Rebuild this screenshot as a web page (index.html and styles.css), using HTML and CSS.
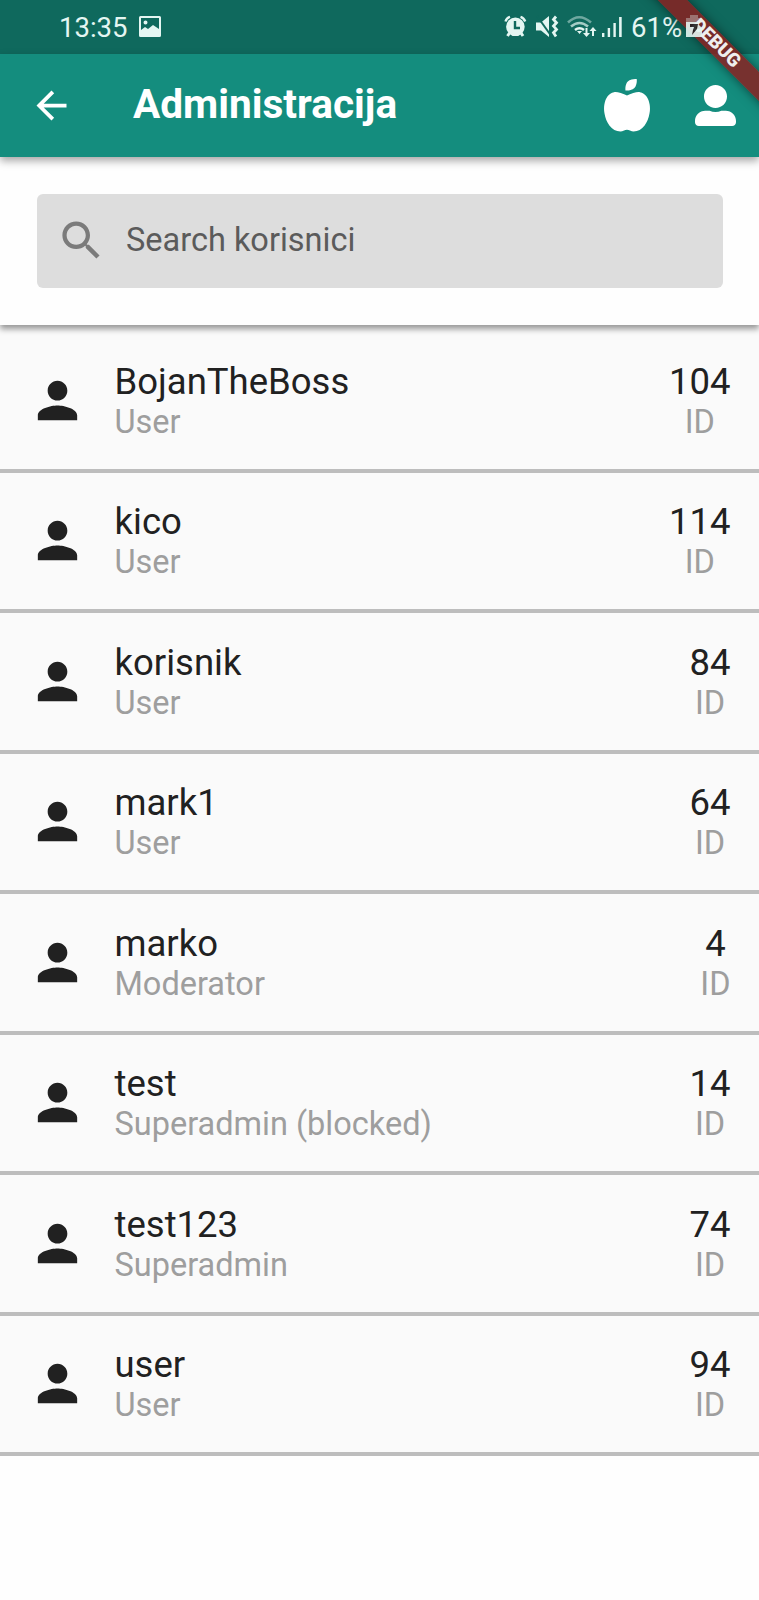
FILE: index.html
```html
<!DOCTYPE html>
<html lang="hr">
<head>
<meta charset="utf-8">
<title>Administracija</title>
<link rel="stylesheet" href="styles.css">
</head>
<body>
<svg width="0" height="0" class="defs"><symbol id="person" viewBox="0 0 24 24"><path d="M12 12c2.21 0 4-1.79 4-4s-1.79-4-4-4-4 1.79-4 4 1.79 4 4 4zm0 2c-2.67 0-8 1.34-8 4v2h16v-2c0-2.66-5.33-4-8-4z"/></symbol></svg>
<div class="screen">
  <div class="status">
    <span class="clock">13:35</span>
    <svg class="photo" width="22" height="21" viewBox="0 0 22 21"><path fill-rule="evenodd" d="M1.5 0h19Q22 0 22 1.5v18q0 1.500-1.500 1.500h-19Q0 21 0 19.500v-18Q0 0 1.500 0zM2 2v12l4-3 3 2 5-4 6 4V2zM6.500 4.500a2 2 0 1 1 0 4 2 2 0 0 1 0-4z"/></svg>
    <svg class="indicators" width="120" height="24" viewBox="0 0 120 24">
      <g fill="none" stroke="currentColor">
        <path stroke-width="2.400" d="M1.500 6.500Q2.500 3 6 1.800M16.500 1.800Q20 3 21.200 6.500"/>
        <path stroke-width="3" d="M5.500 18l-2 3M17 18l2 3"/>
        <path stroke-width="2.800" d="M52 1.500l-2.500 3 3 3.300-3 3.300 3 3.300-3 3.300 2.500 3.800"/>
        <path opacity=".45" stroke-width="2.600" d="M64 7.500Q75 -3 87 7.500"/>
        <path opacity=".7" stroke-width="2.600" d="M67 11.500Q75.500 4.500 84 11.500"/>
        <path stroke-width="2.600" d="M71 15q4.500-3.500 9 0"/>
        <path stroke-width="2" d="M82.500 13v7M89 21v-7"/>
      </g>
      <circle cx="11.400" cy="11.800" r="9.300"/>
      <path class="cut" d="M11 6v7h5" stroke-width="2.400" fill="none"/>
      <path d="M32 7.500h5l8-6.500v21l-8-6.500h-5z"/>
      <path class="cut" d="M33 1l15 21" stroke-width="2" fill="none"/>
      <path d="M73 16h5l-2.500 3zM79 18h7l-3.500 4zM85.500 16h7L89 12zM98 18h2.400v4H98zM103.700 13h2.400v9h-2.400zM109.400 8h2.400v14h-2.400zM115.100 2h2.600v20h-2.600z"/>
    </svg>
    <span class="charge">61%</span>
    <svg class="battery" width="16" height="22" viewBox="0 0 16 22"><path opacity=".4" d="M4 0h8v3h4v5H0V3h4z"/><path d="M0 7h10l6 6v9H0z"/><path fill="#222" d="M4 9h8l-1 5-5 6 1-5 1-3H4z"/></svg>
  </div>
  <header class="appbar">
    <svg class="back" viewBox="0 0 24 24"><path d="M20 11H7.830l5.590-5.590L12 4l-8 8 8 8 1.410-1.410L7.830 13H20v-2z"/></svg>
    <h1 class="title">Administracija</h1>
    <svg class="apple" viewBox="0 0 448 512"><path d="M350.850 129c25.970 4.670 47.270 18.670 63.920 42 14.650 20.670 24.640 46.670 29.960 78 4.670 28.670 4.320 57.330-1 86-7.990 47.330-23.970 87-47.940 119-28.640 38.670-64.590 58-107.870 58-10.660 0-22.300-3.330-34.960-10-8.660-5.330-18.310-8-28.970-8s-20.300 2.670-28.970 8c-12.660 6.670-24.300 10-34.960 10-43.280 0-79.230-19.330-107.870-58-23.970-32-39.950-71.670-47.940-119-5.320-28.670-5.670-57.330-1-86 5.320-31.330 15.310-57.330 29.960-78 16.650-23.330 37.950-37.330 63.920-42 15.980-2.670 37.950-.33 65.920 7 23.970 6.670 44.280 14.670 60.930 24 16.650-9.330 36.960-17.330 60.930-24 27.980-7.330 49.960-9.670 65.940-7zm-54.940-41c-9.320 8.670-21.650 15-36.960 19-10.660 3.330-22.300 5-34.960 5l-14.980-1c-1.330-9.330-1.330-20 0-32 2.670-24 10.320-42.330 22.970-55 9.320-8.670 21.650-15 36.960-19 10.660-3.330 22.300-5 34.960-5l14.980 1 1 15c0 12.670-1.670 24.330-4.990 35-3.990 15.330-10.310 27.670-18.980 37z"/></svg>
    <svg class="account" viewBox="0 0 512 512"><path d="M256 288c79.500 0 144-64.500 144-144S335.500 0 256 0 112 64.500 112 144s64.500 144 144 144zm128 32h-55.100c-22.200 10.200-46.900 16-72.900 16s-50.600-5.800-72.900-16H128C57.300 320 0 377.300 0 448v16c0 26.500 21.500 48 48 48h416c26.500 0 48-21.500 48-48v-16c0-70.700-57.300-128-128-128z"/></svg>
  </header>
  <div class="searchbar">
    <div class="search">
      <svg class="glass" viewBox="0 0 24 24"><path d="M15.500 14h-.79l-.28-.27C15.410 12.590 16 11.110 16 9.500 16 5.910 13.090 3 9.500 3S3 5.910 3 9.500 5.910 16 9.500 16c1.610 0 3.090-.59 4.230-1.570l.27.28v.79l5 4.990L20.490 19l-4.990-5zm-6 0C7.010 14 5 11.990 5 9.500S7.010 5 9.500 5 14 7.010 14 9.500 11.990 14 9.500 14z"/></svg>
      <span class="hint">Search korisnici</span>
    </div>
  </div>
  <main class="list">
    <div class="row"><svg class="avatar"><use href="#person"/></svg><div class="who"><div class="name">BojanTheBoss</div><div class="sub">User</div></div><div class="num"><div class="name">104</div><div class="sub">ID</div></div></div>
    <div class="row"><svg class="avatar"><use href="#person"/></svg><div class="who"><div class="name">kico</div><div class="sub">User</div></div><div class="num"><div class="name">114</div><div class="sub">ID</div></div></div>
    <div class="row"><svg class="avatar"><use href="#person"/></svg><div class="who"><div class="name">korisnik</div><div class="sub">User</div></div><div class="num"><div class="name">84</div><div class="sub">ID</div></div></div>
    <div class="row"><svg class="avatar"><use href="#person"/></svg><div class="who"><div class="name">mark1</div><div class="sub">User</div></div><div class="num"><div class="name">64</div><div class="sub">ID</div></div></div>
    <div class="row"><svg class="avatar"><use href="#person"/></svg><div class="who"><div class="name">marko</div><div class="sub">Moderator</div></div><div class="num"><div class="name">4</div><div class="sub">ID</div></div></div>
    <div class="row"><svg class="avatar"><use href="#person"/></svg><div class="who"><div class="name">test</div><div class="sub">Superadmin (blocked)</div></div><div class="num"><div class="name">14</div><div class="sub">ID</div></div></div>
    <div class="row"><svg class="avatar"><use href="#person"/></svg><div class="who"><div class="name">test123</div><div class="sub">Superadmin</div></div><div class="num"><div class="name">74</div><div class="sub">ID</div></div></div>
    <div class="row"><svg class="avatar"><use href="#person"/></svg><div class="who"><div class="name">user</div><div class="sub">User</div></div><div class="num"><div class="name">94</div><div class="sub">ID</div></div></div>
  </main>
  <div class="corner"><div class="ribbon">DEBUG</div></div>
</div>
</body>
</html>
```
FILE: styles.css
```css
* { box-sizing: border-box; }
body { margin: 0; background: #fff; font-family: Roboto, "Liberation Sans", sans-serif; }
svg { display: block; flex: none; fill: currentColor; }
.defs { position: absolute; }
.screen { position: relative; width: 759px; height: 1600px; overflow: hidden; background: #fefefe; }
.status { display: flex; height: 54px; padding: 0 57px 0 59px; background: #0f695d; color: #e4f6f2; font-size: 27.5px; line-height: 56px; }
.clock { width: 79.500px; }
.photo { margin-top: 16px; }
.indicators { margin: 14.500px 0 0 343.500px; }
.cut { stroke: #0f695d; }
.charge { margin-left: 7px; width: 55px; white-space: nowrap; }
.battery { position: relative; z-index: 4; margin-top: 15px; opacity: .9; }
.appbar { position: relative; z-index: 2; display: flex; align-items: center; height: 103px; padding: 0 23.500px 0 29px; background: #148d7e; color: #fff; box-shadow: 0 4px 8px rgba(0,0,0,.34); }
.back { width: 45px; height: 45px; }
.title { flex: 1; margin: 0 0 0 59px; font-size: 40.600px; line-height: 46px; font-weight: 700; padding-bottom: 3px; white-space: nowrap; }
.apple { width: 46px; height: 52.500px; margin-right: 45px; }
.account { width: 41px; height: 41px; }
.searchbar { position: relative; z-index: 1; height: 168px; padding: 37px 36.500px 0 37px; background: #fefefe; box-shadow: 0 4px 6px rgba(0,0,0,.4); }
.search { display: flex; align-items: center; height: 94px; padding-left: 18.500px; border-radius: 6px; background: #ddd; }
.glass { width: 51px; height: 51px; margin-bottom: 1px; color: #7b7b7b; }
.hint { margin-left: 19.500px; padding-bottom: 2px; color: #5b5b5b; font-size: 32.500px; line-height: 40px; white-space: nowrap; }
.list { padding-top: 7px; background: #fafafa; }
.row { display: flex; align-items: flex-start; height: 140.500px; padding: 28.500px 28.500px 0 28px; border-bottom: 4px solid #bdbdbd; background: #fafafa; color: #212121; white-space: nowrap; }
.avatar { width: 59px; height: 59px; margin-top: 10.300px; }
.who { flex: 1; margin-left: 27.500px; }
.num { display: flex; flex-direction: column; align-items: center; }
.name { font-size: 36.500px; line-height: 42px; }
.sub { color: #9e9e9e; font-size: 32.500px; line-height: 38px; }
.corner { position: absolute; z-index: 3; top: 0; right: 0; width: 130px; height: 130px; overflow: hidden; }
.ribbon { position: absolute; left: -13.500px; top: 32.500px; width: 200px; height: 21px; transform: rotate(45deg); background: rgba(142,29,29,.82); box-shadow: 0 0 11px rgba(0,0,0,.5); color: #eee; font-size: 18.800px; font-weight: 900; line-height: 21px; text-align: center; }
```
